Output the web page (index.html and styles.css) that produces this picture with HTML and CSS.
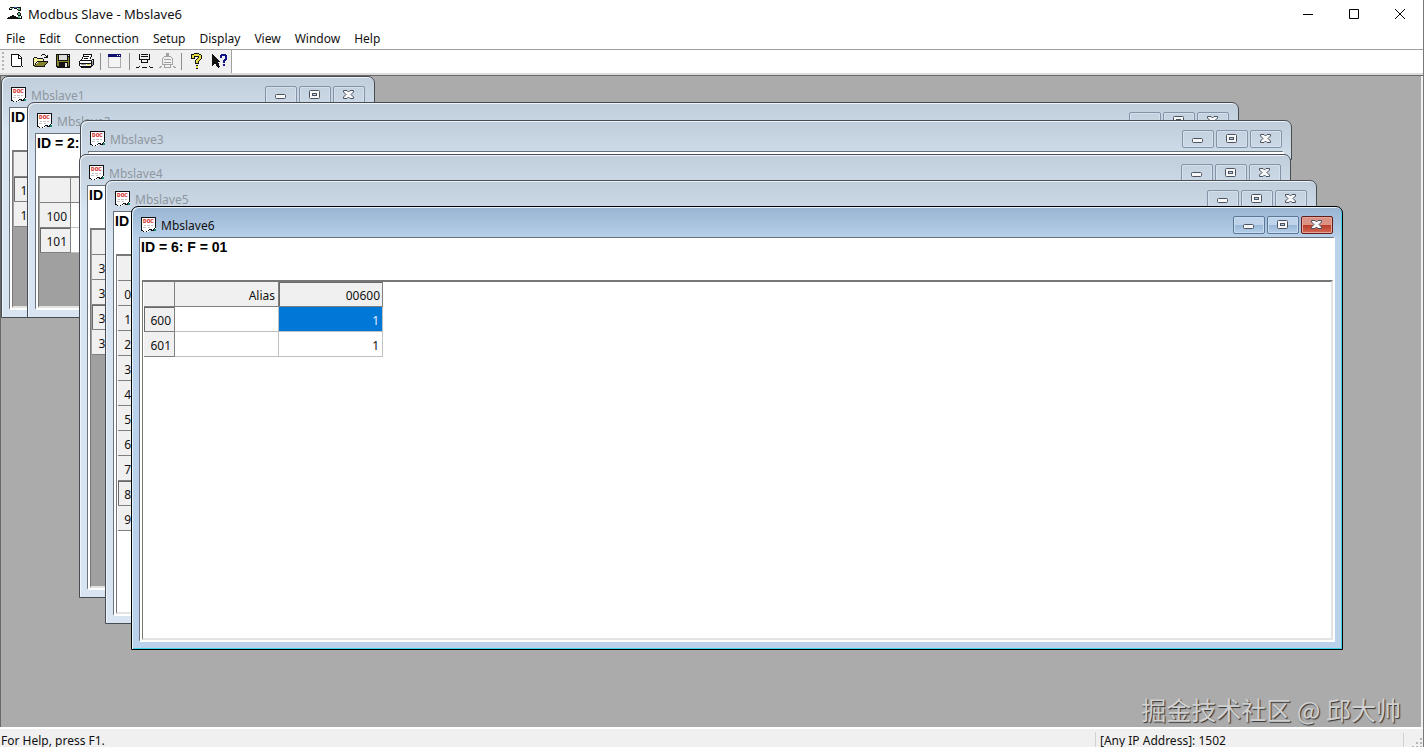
FILE: index.html
```html
<!DOCTYPE html>
<html lang="en">
<head>
<meta charset="utf-8">
<title>Modbus Slave - Mbslave6</title>
<link rel="stylesheet" href="styles.css">
</head>
<body>
<svg class="defs" aria-hidden="true">
  <symbol id="doc" viewBox="0 0 16 16">
    <path d="M1 1h14v12h-2v1h-2v-1h-2v1h-1v1h-5v-1h-2z" fill="#fff"/>
    <path d="M0 0h15v1h-15zM0 0h1v14h-1zM14 0h1v11h-1zM1 13h1v1h-1zM2 14h1v1h-1zM3 15h3v-1h2v-1h2v1h3v-1h1v-2h-1v1h-1v1h-1v-1h-3v1h-1v1h-2v1h-2z" fill="#111"/>
    <path d="M3 8h2v1h-2zM6 8h3v1h-3zM10 8h2v1h-2zM2 10h3v1h-3zM7 10h2v1h-2z" fill="#c4c4c4"/>
    <path d="M13 12h2v2h-2z" fill="#178a70"/>
    <text x="7.5" y="6" text-anchor="middle" class="doc-text">DOC</text>
  </symbol>
  <symbol id="min" viewBox="0 0 12 12"><rect x=".5" y="5.5" width="10" height="4" rx="1" fill="#f7f7f7" stroke="#4b5260"/></symbol>
  <symbol id="max" viewBox="0 0 12 12"><rect x=".5" y="1.500" width="10" height="8" rx="1" fill="#f7f7f7" stroke="#4b5260"/><rect x="3.500" y="4.500" width="4" height="2" fill="#b9cbe0" stroke="#4b5260"/></symbol>
  <symbol id="close" viewBox="0 0 12 12"><path d="M.5 1.500H4L5.500 3 7 1.500h3.500V3L8 5.500 10.500 8v1.500H7L5.500 8 4 9.500H.5V8L3 5.500.5 3z" fill="#f7f7f7" stroke="#4b5260"/></symbol>
</svg>

<header class="titlebar">
  <svg class="app-icon" width="16" height="16" viewBox="0 0 16 16" shape-rendering="crispEdges">
    <path d="M3 1h4v1h-4zM2 2h1v1h2v1h-3zM7 2h3v1h-3zM10 1h4v1h-4zM13 2h1v3h-1zM11 4h2v1h-2zM10 3h1v1h-1zM11 6h2v1h-2zM10 7h1v2h-1zM13 7h1v3h-1zM11 9h2v1h-2zM11 12h3v1h-3zM14 10h1v3h-1zM10 11h1v2h-1zM1 11h2v-1h2v-1h2v1h2v1h1v2h-10v-1h1z" fill="#111"/>
    <path d="M4 2h2v1h-2zM11 2h2v2h-2zM11 7h2v2h-2zM11 10h2v2h-2z" fill="#62b78c"/><path d="M7 1h3v1h-3z" fill="#345ab4"/>
  </svg>
  <h1 class="app-title">Modbus Slave - Mbslave6</h1>
  <div class="app-controls">
    <button aria-label="Minimize"><svg width="12" height="12" viewBox="0 0 12 12"><path d="M1 6.500h10" stroke="#000"/></svg></button>
    <button aria-label="Maximize"><svg width="12" height="12" viewBox="0 0 12 12"><path d="M1.500 1.500h9v9h-9z" fill="none" stroke="#000"/></svg></button>
    <button aria-label="Close"><svg width="12" height="12" viewBox="0 0 12 12"><path d="M1 1l10 10M11 1L1 11" stroke="#000"/></svg></button>
  </div>
</header>

<nav class="menu">
  <button>File</button><button>Edit</button><button>Connection</button><button>Setup</button><button>Display</button><button>View</button><button>Window</button><button>Help</button>
</nav>

<div class="toolrow">
  <div class="toolbar">
    <span class="gripper"></span>
    <button aria-label="New"><svg viewBox="0 0 17 17"><path d="M3 2h7v1h1v1h1v1h1v9h-10z" fill="#fff"/><path d="M3 1h7v1h-7zM2 1h1v13h-1zM2 14h12v-1h-12zM12 5h1v9h-1zM9 2h1v3h3v1h-4zM10 2h1v1h-1zM11 3h1v1h-1zM12 4h1v1h-1z" fill="#111"/></svg></button>
    <button aria-label="Open"><svg viewBox="0 0 17 17"><path d="M2 5h3l1 1h5v2h-5l-4 5z" fill="#f6f2a0"/><path d="M6 9h10l-4 5H2z" fill="#85832b"/><path d="M2 4h3v1h-3zM1 5h1v9h-1zM5 5h6v1h-6zM11 6h1v2h-1zM5 8h11v1h-11zM4 9h1v1h-1zM3 10h1v2h-1zM2 12h1v2h-1zM1 14h11v-1h-11zM15 9h1v1h-1zM14 10h1v1h-1zM13 11h1v1h-1zM12 12h1v2h-1zM9 2h1v1h-1zM10 1h3v1h-3zM13 2h1v1h-1zM14 3h1v2h-1zM12 4h3v1h-3zM15 2h1v3h-1z" fill="#111"/></svg></button>
    <button aria-label="Save"><svg viewBox="0 0 17 17"><path d="M1 1h14v14h-13v-1h-1z" fill="#111"/><path d="M2 2h1v11h-1zM13 4h1v9h-1zM3 8h10v1h-10zM2 9h2v4h-2z" fill="#85832b"/><path d="M4 2h8v5h-8zM13 2h1v1h-1zM10 10h2v4h-2z" fill="#ddd"/></svg></button>
    <button aria-label="Print"><svg viewBox="0 0 17 17"><path d="M5 2h8l-2 5h3v5H2V8h2z" fill="#fff"/><path d="M5 1h9v1h-9zM5 2h1v2h-1zM4 4h1v2h-1zM3 6h1v1h-1zM13 2h1v2h-1zM12 4h1v2h-1zM6 3h5v1h-5zM6 5h4v1h-4zM2 7h12v1h-12zM1 8h1v5h-1zM2 10h11v1h-11zM2 13h12v1h-12zM3 14h10v1h-10zM13 8h1v6h-1zM15 6h1v6h-1zM14 6h1v1h-1zM14 12h1v1h-1z" fill="#111"/><path d="M9 11h3v1h-3z" fill="#d5cb26"/><path d="M3 11h5v1h-5zM14 8h1v4h-1z" fill="#999"/></svg></button>
    <span class="sep"></span>
    <button aria-label="Window definition"><svg viewBox="0 0 17 17"><path d="M1 1h13v14h-13z" fill="#aaa"/><path d="M2 4h11v10h-11z" fill="#f4f4f4"/><path d="M1 1h13v3h-13z" fill="#10106f"/><path d="M10 2h1v1h-1zM12 2h1v1h-1z" fill="#fff"/></svg></button>
    <span class="sep"></span>
    <button aria-label="Connect"><svg viewBox="0 0 17 17"><path d="M3 1h1v6h-1zM13 1h1v6h-1zM5 1h7v1h-7zM5 3h7v1h-7zM3 6h11v1h-11zM5 7h1v3h-1zM11 7h1v3h-1zM5 9h7v1h-7zM0 14h3v1h-3zM3 13h1v1h-1zM6 14h5v1h-5zM13 13h1v1h-1zM14 14h3v1h-3z" fill="#111"/></svg></button>
    <button disabled aria-label="Disconnect"><svg viewBox="0 0 17 17"><path d="M7 0h3v3h-3zM5 3h7v1h-7zM4 4h1v1h-1zM12 4h1v1h-1zM3 5h1v7h-1zM13 5h1v7h-1zM5 6h7v1h-7zM5 9h7v1h-7zM3 11h11v1h-11zM5 12h1v2h-1zM11 12h1v2h-1zM5 14h7v1h-7zM1 13h2v1h-2zM0 14h2v1h-2zM14 13h2v1h-2zM15 14h2v1h-2z" fill="#a2a2a2"/></svg></button>
    <span class="sep"></span>
    <button aria-label="About"><svg viewBox="0 0 17 17"><path d="M5 6V3l2-1h3l2 1v2L9 8v3M8 14h2" fill="none" stroke="#111" stroke-width="4"/><path d="M5 5V3l2-1h3l2 1v2L9 8v2M8 14h2" fill="none" stroke="#e8df42" stroke-width="2"/></svg></button>
    <button aria-label="Context help"><svg viewBox="0 0 17 17"><path d="M1 1v12l3-3 3 5 2-1-2-5h3z" fill="#111"/><path d="M10 5V3l1-1h3l1 1v3l-2 2v2M12 12h2" fill="none" stroke="#15158a" stroke-width="2"/></svg></button>
  </div>
</div>

<main class="mdi">
  <section class="win w1">
    <header class="caption"><svg class="doc"><use href="#doc"/></svg><h2>Mbslave1</h2><div class="controls"><button aria-label="Minimize"><svg><use href="#min"/></svg></button><button aria-label="Maximize"><svg><use href="#max"/></svg></button><button aria-label="Close"><svg><use href="#close"/></svg></button></div></header>
    <div class="client"><p class="info">ID = 1: F = 01</p><div class="view dim"><table class="grid"><tr><th></th><th></th></tr><tr class="current"><th>100</th><td></td></tr><tr><th>101</th><td></td></tr></table></div></div>
  </section>
  <section class="win w2">
    <header class="caption"><svg class="doc"><use href="#doc"/></svg><h2>Mbslave2</h2><div class="controls"><button aria-label="Minimize"><svg><use href="#min"/></svg></button><button aria-label="Maximize"><svg><use href="#max"/></svg></button><button aria-label="Close"><svg><use href="#close"/></svg></button></div></header>
    <div class="client"><p class="info">ID = 2: F = 02</p><div class="view dim"><table class="grid"><tr><th></th><th></th></tr><tr><th>100</th><td></td></tr><tr class="current"><th>101</th><td></td></tr></table></div></div>
  </section>
  <section class="win w3">
    <header class="caption"><svg class="doc"><use href="#doc"/></svg><h2>Mbslave3</h2><div class="controls"><button aria-label="Minimize"><svg><use href="#min"/></svg></button><button aria-label="Maximize"><svg><use href="#max"/></svg></button><button aria-label="Close"><svg><use href="#close"/></svg></button></div></header>
    <div class="client"></div>
  </section>
  <section class="win w4">
    <header class="caption"><svg class="doc"><use href="#doc"/></svg><h2>Mbslave4</h2><div class="controls"><button aria-label="Minimize"><svg><use href="#min"/></svg></button><button aria-label="Maximize"><svg><use href="#max"/></svg></button><button aria-label="Close"><svg><use href="#close"/></svg></button></div></header>
    <div class="client"><p class="info">ID = 4: F = 03</p><div class="view dim"><table class="grid"><tr><th></th><th></th></tr><tr><th>300</th><td></td></tr><tr><th>301</th><td></td></tr><tr class="current"><th>302</th><td></td></tr><tr><th>303</th><td></td></tr></table></div></div>
  </section>
  <section class="win w5">
    <header class="caption"><svg class="doc"><use href="#doc"/></svg><h2>Mbslave5</h2><div class="controls"><button aria-label="Minimize"><svg><use href="#min"/></svg></button><button aria-label="Maximize"><svg><use href="#max"/></svg></button><button aria-label="Close"><svg><use href="#close"/></svg></button></div></header>
    <div class="client"><p class="info">ID = 5: F = 03</p><div class="view"><table class="grid narrow"><tr><th></th><th></th></tr><tr><th>0</th><td></td></tr><tr><th>1</th><td></td></tr><tr><th>2</th><td></td></tr><tr><th>3</th><td></td></tr><tr><th>4</th><td></td></tr><tr><th>5</th><td></td></tr><tr><th>6</th><td></td></tr><tr><th>7</th><td></td></tr><tr class="current"><th>8</th><td></td></tr><tr><th>9</th><td></td></tr></table></div></div>
  </section>
  <section class="win w6 active">
    <header class="caption"><svg class="doc"><use href="#doc"/></svg><h2>Mbslave6</h2><div class="controls"><button aria-label="Minimize"><svg><use href="#min"/></svg></button><button aria-label="Maximize"><svg><use href="#max"/></svg></button><button class="close" aria-label="Close"><svg><use href="#close"/></svg></button></div></header>
    <div class="client"><p class="info">ID = 6: F = 01</p><div class="view"><table class="grid wide"><tr><th></th><th>Alias</th><th class="current-col">00600</th></tr><tr class="current"><th>600</th><td></td><td class="selected">1</td></tr><tr><th>601</th><td></td><td>1</td></tr></table></div></div>
  </section>
  <p class="watermark">掘金技术社区 @ 邱大帅</p>
</main>

<footer class="status">
  <span class="help">For Help, press F1.</span>
  <span class="address">[Any IP Address]: 1502</span>
  <span class="corner"><svg width="12" height="12" viewBox="0 0 12 12"><path d="M9 1h2v2h-2zM5 5h2v2h-2zM9 5h2v2h-2zM1 9h2v2h-2zM5 9h2v2h-2zM9 9h2v2h-2z" fill="#b4b4b4"/></svg></span>
</footer>
</body>
</html>
```
FILE: styles.css
```css
* { box-sizing: border-box; }
body {
  margin: 0;
  height: 100vh;
  display: flex;
  flex-direction: column;
  overflow: hidden;
  background: #fff;
  border-right: 1px solid #777;
  font: 12px/18px "Noto Sans", "Noto Sans CJK SC", sans-serif;
  color: #111;
}
h1, h2, p { margin: 0; font-size: inherit; font-weight: normal; }
button { margin: 0; padding: 0; border: 0; background: none; font: inherit; color: inherit; display: grid; place-items: center; }
.defs { display: none; }
.doc-text { font: bold 6px "Liberation Mono", monospace; fill: #d21a1a; }

.titlebar { display: flex; align-items: center; height: 28px; padding-left: 7px; }
.app-icon { margin-right: 5px; }
.app-title { font-size: 13px; }
.app-controls { display: flex; margin-left: auto; }
.app-controls button { width: 46px; height: 28px; }

.menu { display: flex; height: 22px; border-bottom: 1px solid #a0a0a0; }
.menu button { padding: 0 7px; }
.menu button:first-child { padding-left: 6px; }

.toolrow { height: 25px; border-bottom: 2px solid #dcdcdc; }
.toolbar { display: flex; align-items: center; width: 232px; height: 23px; background: #f0f0f0; border-right: 1px solid #a0a0a0; }
.toolbar button { width: 23px; height: 22px; }
.toolbar svg { width: 17px; height: 17px; shape-rendering: crispEdges; }
.gripper { width: 2px; height: 20px; margin: 0 2px; background: repeating-linear-gradient(#b4b4b4 0 2px, #f0f0f0 2px 4px); }
.sep { width: 1px; height: 17px; margin: 0 3px 0 2px; background: #8c8c8c; }

.mdi {
  position: relative;
  flex: 1;
  min-height: 0;
  overflow: hidden;
  background: #ababab;
  border: solid #696969;
  border-width: 1px 0 0 1px;
  box-shadow: inset -2px 0 #f0f0f0;
}
.win {
  position: absolute;
  display: flex;
  flex-direction: column;
  overflow: hidden;
  padding: 0 7px 7px;
  background: linear-gradient(#c0cddb, #d8e4f1 56px);
  border: 1px solid #484d54;
  border-radius: 7px 7px 0 0;
  box-shadow: inset 1px 1px #eef4fa;
}
.w1 { left: 0; top: 0; width: 374px; height: 242px; }
.w2 { left: 26px; top: 26px; width: 1212px; height: 216px; }
.w3 { left: 79px; top: 44px; width: 1212px; height: 40px; }
.w4 { left: 78px; top: 78px; width: 1212px; height: 444px; }
.w5 { left: 104px; top: 104px; width: 1212px; height: 444px; }
.w6 { left: 130px; top: 130px; width: 1212px; height: 444px; }
.active {
  background: linear-gradient(#98b4d2, #b9d1ea 32px);
  border-color: #000;
  box-shadow: inset 1px 1px #e4f3fc, inset -1px -1px #3fd2e6;
}
.caption { display: flex; flex: none; height: 30px; padding: 8px 1px 0 2px; color: #8e979f; }
.active .caption { color: #111; }
.caption h2 { padding-top: 2px; }
.doc { width: 16px; height: 16px; margin: 2px 4px 0 0; shape-rendering: crispEdges; }
.controls { display: flex; gap: 2px; margin: 1px 1px 0 auto; }
.controls button { width: 32px; height: 18px; border: 1px solid #8393a8; border-radius: 2px; box-shadow: inset 0 0 0 1px #d5e0ec; }
.controls svg { width: 12px; height: 12px; }
.active .controls button { border-color: #5d7797; background: linear-gradient(#bfd3ea 50%, #98b6d7 50%, #b6cfe9); box-shadow: inset 0 0 0 1px #c8dcf0; }
.active .controls .close { border-color: #611d17; background: linear-gradient(#dc9185 50%, #ba3a28 50%, #d36956); box-shadow: inset 0 0 0 1px #e5a69b; }

.client { display: flex; flex: 1; flex-direction: column; min-height: 0; background: #fff; border: solid; border-width: 1px 2px 2px 1px; border-color: #69717a #fff #fff #69717a; }
.info { flex: none; height: 42px; padding-left: 1px; font: bold 14px/18px "Liberation Sans", Arial, sans-serif; color: #000; }
.view { flex: 1; min-height: 0; margin-left: 2px; padding-left: 1px; overflow: hidden; background: #fff; border: solid; border-width: 2px 2px 2px 1px; border-color: #777 #e3e3e3 #e3e3e3 #777; }
.dim { background: #a0a0a0; }

.grid { width: 135px; table-layout: fixed; border-collapse: separate; border-spacing: 0; }
.wide { width: 239px; }
.grid th, .grid td { width: 104px; height: 25px; padding: 3px 3px 0 0; text-align: right; font-weight: normal; line-height: 18px; border: solid #c0c0c0; border-width: 0 1px 1px 0; background: #fff; }
.grid th { background: #f0f0f0; border-color: #808080; }
.grid th:first-child { width: 31px; padding-right: 3px; }
.narrow { width: 122px; }
.grid.narrow th:first-child { width: 18px; padding-right: 4px; }
.grid .current th { box-shadow: inset 1px 1px #696969; }
.grid .current-col { box-shadow: inset 1px 1px #696969; padding-right: 2px; }
.grid .selected { background: #0078d7; color: #e3efff; }

.watermark {
  position: absolute;
  right: 22px;
  bottom: 1px;
  font: 25px/34px "Noto Sans CJK SC", sans-serif;
  color: #d0d0d0;
  text-shadow: 1px 1px 1px #333;
}

.status { display: flex; align-items: center; height: 20px; background: #f0f0f0; border-top: 2px solid #fff; padding-top: 6px; }
.help { flex: 1; padding-left: 1px; }
.address { width: 308px; padding-left: 4px; border-left: 1px solid #d2d2d2; }
.corner { display: flex; justify-content: flex-end; align-items: flex-end; width: 20px; height: 16px; border-left: 1px solid #d2d2d2; }
```
